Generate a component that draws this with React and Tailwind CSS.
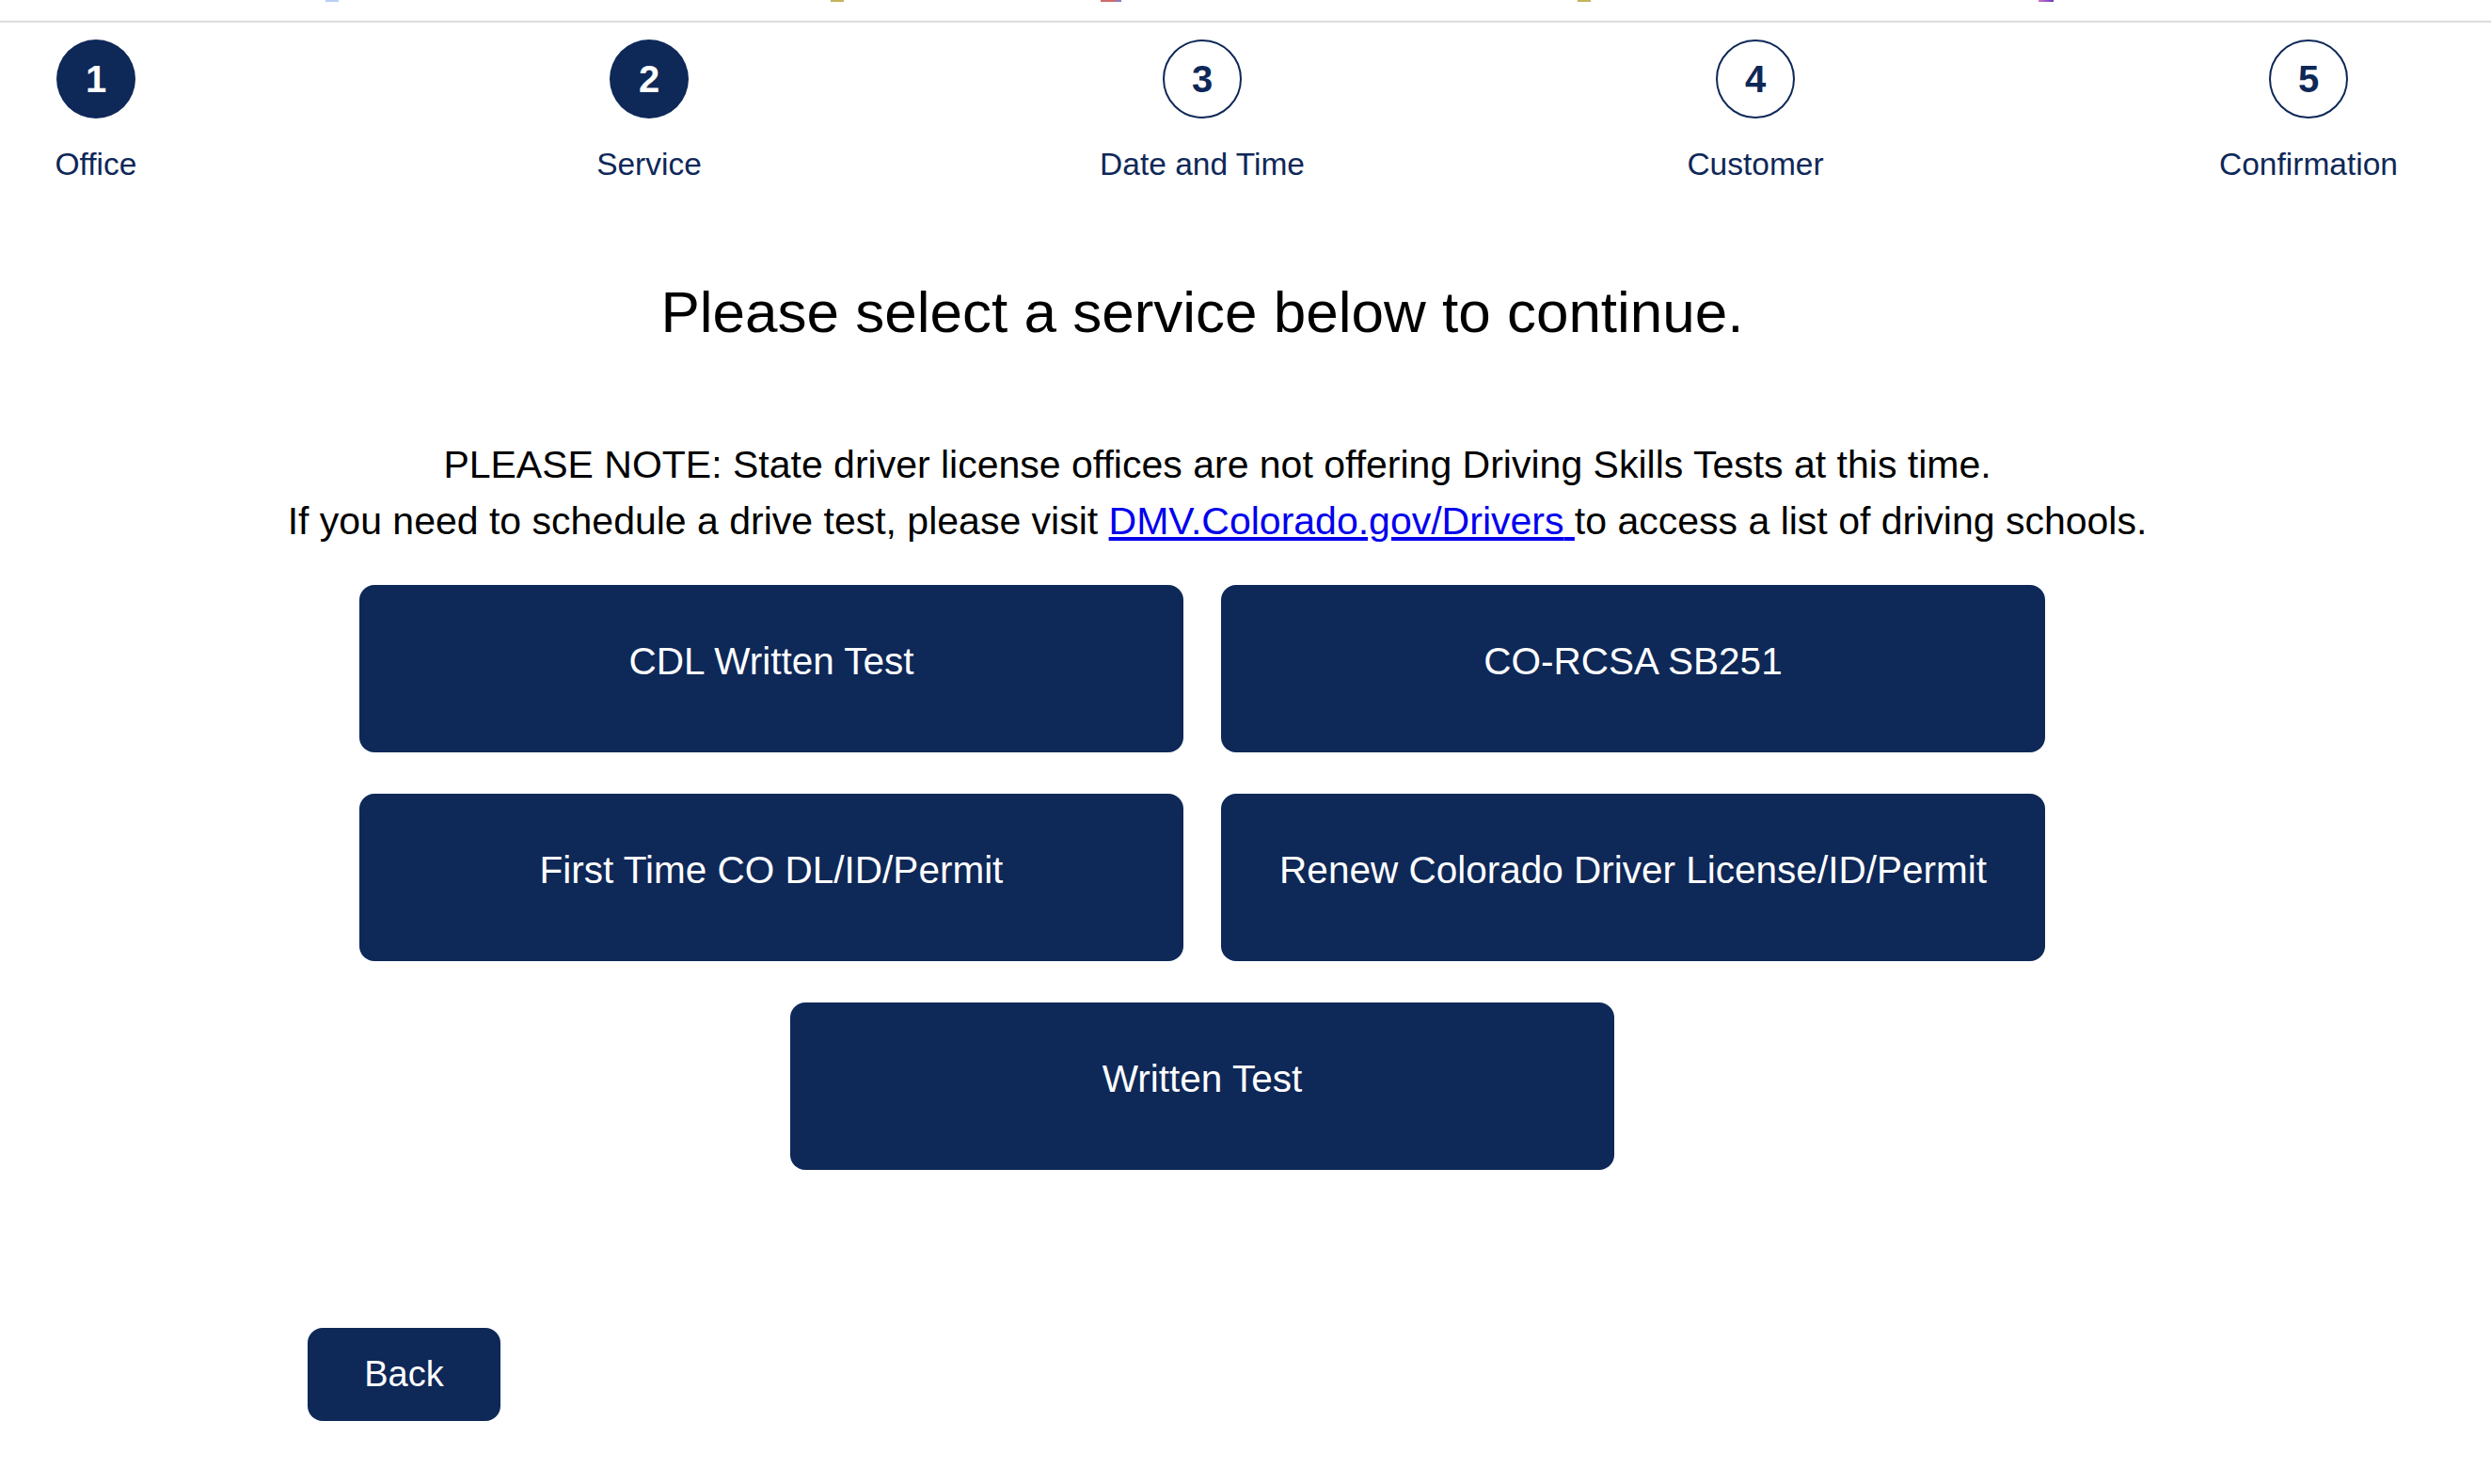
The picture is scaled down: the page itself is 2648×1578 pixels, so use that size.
import React from 'react';

const steps = [
  { n: 1, label: 'Office', done: true },
  { n: 2, label: 'Service', done: true },
  { n: 3, label: 'Date and Time', done: false },
  { n: 4, label: 'Customer', done: false },
  { n: 5, label: 'Confirmation', done: false },
];

const services = [
  'CDL Written Test',
  'CO-RCSA SB251',
  'First Time CO DL/ID/Permit',
  'Renew Colorado Driver License/ID/Permit',
];

function ServiceButton({ children, className = '' }) {
  return (
    <button
      type="button"
      className={`h-[178px] w-[876px] rounded-[16px] bg-[#0e2858] pb-[17px] flex items-center justify-center text-white text-[40.5px] leading-[46px] ${className}`}
    >
      {children}
    </button>
  );
}

export default function App() {
  return (
    <div className="min-h-screen bg-white font-['Liberation_Sans',Arial,sans-serif]">
      {/* bookmark bar remnants */}
      <div className="h-[22px] flex items-start">
        <span className="ml-[346px] h-[2px] w-[14px] bg-[#b8cff5]" />
        <span className="ml-[523px] h-[2px] w-[14px] bg-[#c2b45a]" />
        <span className="ml-[273px] h-[2px] w-[16px] bg-[#cf6a6a]" />
        <span className="h-[2px] w-[6px] bg-[#8a7cb4]" />
        <span className="ml-[485px] h-[2px] w-[14px] bg-[#c2b45a]" />
        <span className="ml-[476px] h-[2px] w-[16px] bg-gradient-to-r from-[#d070c8] to-[#6a3cc0]" />
      </div>
      <div className="h-[2px] bg-[#dcdcdc]" />

      <div className="w-[2556px]">
        {/* Stepper */}
        <div className="flex justify-between pt-[18px]">
          {steps.map((s) => (
            <div key={s.n} className="w-[204px] flex flex-col items-center">
              <div
                className={
                  s.done
                    ? 'size-[84px] rounded-full bg-[#0e2858] text-white flex items-center justify-center text-[40px] font-bold'
                    : 'size-[84px] rounded-full border-2 border-[#0e2858] text-[#0e2858] flex items-center justify-center text-[40px] font-bold'
                }
              >
                {s.n}
              </div>
              <div className="mt-[30px] text-[33.5px] leading-[38px] text-[#0e2858] whitespace-nowrap">
                {s.label}
              </div>
            </div>
          ))}
        </div>

        <h1 className="mt-[102px] text-center text-[62px] leading-[72px] text-black">
          Please select a service below to continue.
        </h1>

        <div className="mt-[96px] pl-[32px] text-center text-[41px] leading-[60px] text-black">
          <p>PLEASE NOTE: State driver license offices are not offering Driving Skills Tests at this time.</p>
          <p>
            If you need to schedule a drive test, please visit{' '}
            <a href="#" className="text-[#0000ee] underline">
              DMV.Colorado.gov/Drivers{' '}
            </a>
            to access a list of driving schools.
          </p>
        </div>

        <div className="mt-[38px] mx-auto w-[1792px] grid grid-cols-2 gap-x-[40px] gap-y-[44px]">
          {services.map((s) => (
            <ServiceButton key={s}>{s}</ServiceButton>
          ))}
          <ServiceButton className="col-span-2 justify-self-center">Written Test</ServiceButton>
        </div>

        <button
          type="button"
          className="mt-[168px] ml-[327px] w-[205px] h-[99px] rounded-[16px] bg-[#0e2858] text-white text-[38px] flex items-center justify-center"
        >
          Back
        </button>
      </div>
    </div>
  );
}
